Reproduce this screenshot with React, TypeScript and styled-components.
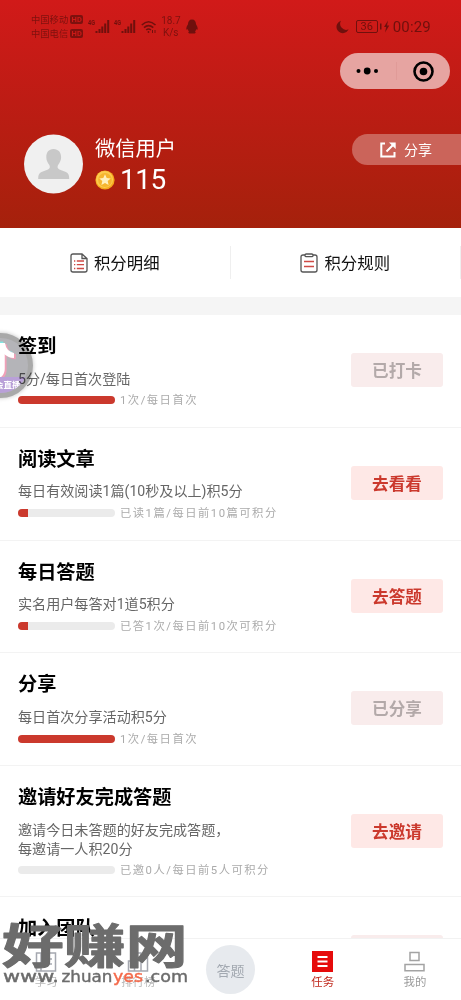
import React from "react";
import styled, { createGlobalStyle } from "styled-components";

const Global = createGlobalStyle`
  * { box-sizing: border-box; }
  html, body { margin: 0; padding: 0; }
  body {
    background: #fff;
    font-family: Roboto, "Noto Sans CJK SC", sans-serif;
    overflow: hidden;
  }
  svg { display: block; flex: none; }
`;

const Screen = styled.div`
  position: relative;
  width: 461px;
  height: 1000px;
  overflow: hidden;
  display: flex;
  flex-direction: column;
  background: #fff;
`;

const Header = styled.header`
  flex: none;
  height: 228px;
  background: linear-gradient(#d11a19 0%, #bd1c14 45%, #a5210c 100%);
  color: #fff;
`;

const StatusBar = styled.div`
  height: 53px;
  padding: 13px 30px 0 31px;
  display: flex;
  justify-content: space-between;
  align-items: flex-start;
  color: #70100d;
`;

const StatusGroup = styled.div<{ $gap: number }>`
  display: flex;
  align-items: center;
  height: 27px;
  gap: ${(p) => p.$gap}px;
`;

const Carriers = styled.div`
  display: flex;
  flex-direction: column;
  font-size: 9.3px;
  line-height: 14px;
  opacity: 0.85;
`;

const Carrier = styled.div`
  display: flex;
  align-items: center;
  gap: 2px;
`;

const HdTag = styled.span`
  width: 13px;
  height: 9px;
  border-radius: 2px;
  background: #70100d;
  color: #cd1a18;
  font-size: 7.5px;
  line-height: 9px;
  font-weight: 700;
  text-align: center;
`;

const Speed = styled.div`
  font-size: 10px;
  line-height: 12px;
  text-align: center;
  width: 19px;
  margin-right: 1px;
  opacity: 0.85;
`;

const Battery = styled.div`
  width: 22px;
  height: 13px;
  border: 1px solid #70100d;
  border-radius: 2px;
  font-size: 11px;
  line-height: 12px;
  text-align: center;
`;

const Clock = styled.div`
  font-size: 15px;
  letter-spacing: 0.2px;
  line-height: 18px;
`;

const CapsuleRow = styled.div`
  display: flex;
  justify-content: flex-end;
  padding-right: 11px;
`;

const Capsule = styled.div`
  width: 110px;
  height: 36px;
  border-radius: 18px;
  background: #e6a4a1;
  display: flex;
  align-items: center;
  justify-content: space-between;
  padding: 0 16px;
`;

const CapsuleLine = styled.span`
  width: 1px;
  height: 18px;
  margin-left: 1px;
  background: #e09b98;
`;

const Profile = styled.div`
  margin-top: 45px;
  padding-left: 24px;
  display: flex;
  align-items: flex-start;
`;

const Identity = styled.div`
  margin-left: 12px;
  padding-top: 1px;
  flex: 1;
`;

const UserName = styled.div`
  font-size: 20.3px;
  line-height: 28px;
`;

const Points = styled.div`
  display: flex;
  align-items: center;
  gap: 5px;
  height: 33px;
  font-size: 28px;
  line-height: 33px;
  letter-spacing: -0.5px;
`;

const ShareButton = styled.div`
  width: 109px;
  height: 31px;
  border-radius: 16px 0 0 16px;
  background: #cb645a;
  display: flex;
  align-items: center;
  padding-left: 28px;
  gap: 8px;
  font-size: 14px;
  line-height: 34px;
`;

const Actions = styled.div`
  flex: none;
  display: flex;
  height: 87px;
  border-bottom: 18px solid #f5f5f5;
  align-items: center;
`;

const Action = styled.div`
  width: 230.5px;
  height: 33px;
  border-right: 1px solid #efefef;
  display: flex;
  align-items: center;
  justify-content: center;
  gap: 6px;
  font-size: 16.4px;
  color: #111;
`;

const ActionLabel = styled.span`
  line-height: 33px;
  padding-top: 1px;
`;

const TaskRow = styled.section<{ $h: number }>`
  flex: none;
  height: ${(p) => p.$h}px;
  border-bottom: 1px solid #f3f3f3;
  padding: 17px 18px 0;
  display: flex;
  justify-content: space-between;
`;

const TaskBody = styled.div`
  display: flex;
  flex-direction: column;
`;

const TaskTitle = styled.h2`
  margin: 0;
  font-size: 19.2px;
  line-height: 30px;
  font-weight: 700;
  color: #000;
`;

const TaskDesc = styled.p`
  margin: 7.7px 0 0;
  font-size: 14.1px;
  line-height: 19px;
  color: #666;
  white-space: pre-line;
`;

const Progress = styled.div`
  display: flex;
  align-items: center;
  gap: 5px;
  height: 16px;
  margin-top: 3.8px;
  font-size: 11.3px;
  letter-spacing: 1.5px;
  color: #aaa;
`;

const ProgressNote = styled.span`
  line-height: 16px;
  padding-top: 2px;
`;

const Track = styled.div`
  width: 97px;
  height: 8px;
  border-radius: 4px;
  background: #ebebeb;
  overflow: hidden;
`;

const Fill = styled.div<{ $pct: number }>`
  width: ${(p) => p.$pct}%;
  height: 100%;
  background: #cb392d;
`;

const TaskButton = styled.div<{ $done?: boolean; $tall?: boolean }>`
  width: 92px;
  height: 34px;
  margin-top: ${(p) => (p.$tall ? 31 : 21)}px;
  border-radius: 3px;
  background: ${(p) => (p.$done ? "#f9ecec" : "#fee8e6")};
  color: ${(p) => (p.$done ? "#b3a9a9" : "#cb392d")};
  font-size: 16.6px;
  line-height: 37px;
  font-weight: 700;
  text-align: center;
`;

const NavBar = styled.nav`
  position: absolute;
  left: 0;
  right: 0;
  bottom: 0;
  height: 62px;
  background: #fff;
  border-top: 1px solid #f2f2f2;
  display: flex;
`;

const NavItem = styled.div<{ $active?: boolean; $faint?: boolean }>`
  flex: 1;
  display: flex;
  flex-direction: column;
  align-items: center;
  padding-top: 12px;
  gap: 1px;
  font-size: 11.4px;
  line-height: 16px;
  color: ${(p) => (p.$active ? "#c0281c" : p.$faint ? "#b8b8b8" : "#9b9b9b")};
`;

const Quiz = styled.div`
  width: 49px;
  height: 49px;
  margin-top: -6px;
  border-radius: 50%;
  background: #e7eaee;
  color: #a3a9b1;
  font-size: 14px;
  line-height: 53px;
  text-align: center;
`;

const FloatBall = styled.div`
  position: absolute;
  left: -32px;
  top: 333px;
  width: 65px;
  height: 65px;
  border-radius: 50%;
  border: 5px solid #a9a9a9;
  background: #b4b4b8;
  box-shadow: 0 0 4px rgba(0, 0, 0, 0.25);
  overflow: hidden;
  mix-blend-mode: multiply;
`;

const BallLabel = styled.div`
  position: absolute;
  left: 0;
  right: 0;
  bottom: 0;
  height: 16px;
  padding-left: 22px;
  background: #b9a0d8;
  color: #fff;
  font-size: 8.5px;
  line-height: 16px;
  font-weight: 700;
  white-space: nowrap;
`;

const BallNote = styled.div`
  position: absolute;
  left: 11px;
  top: 1px;
`;

const Watermark = styled.div`
  position: absolute;
  left: 0;
  top: 914px;
`;

const Signal = () => (
  <svg width="22" height="17" viewBox="0 0 22 17" fill="#70100d">
    <text x="0" y="7" fontSize="7" fontWeight="700" fontFamily="Roboto, sans-serif" textLength="7" lengthAdjust="spacingAndGlyphs">4G</text>
    <rect x="7.5" y="13" width="2" height="2" />
    <rect x="10.5" y="11" width="2" height="4" />
    <rect x="13.3" y="8.5" width="2" height="6.5" />
    <rect x="16.2" y="5.5" width="2" height="9.5" />
    <rect x="19.2" y="2" width="2" height="13" />
  </svg>
);

const Note = ({ color, shift }: { color: string; shift: number }) => (
  <g transform={`translate(${shift} ${shift * 0.7})`}>
    <path d="M18 4V30A8 8 0 1 1 10 22" fill="none" stroke={color} strokeWidth="5.5" />
    <path d="M16 4H21Q22 12 30 14V19Q24 19 19 14Z" fill={color} />
  </g>
);

const tasks = [
  { h: 112.75, title: "签到", desc: "5分/每日首次登陆", pct: 100, note: "1次/每日首次", action: "已打卡", done: true },
  { h: 112.75, title: "阅读文章", desc: "每日有效阅读1篇(10秒及以上)积5分", pct: 10, note: "已读1篇/每日前10篇可积分", action: "去看看" },
  { h: 112.75, title: "每日答题", desc: "实名用户每答对1道5积分", pct: 10, note: "已答1次/每日前10次可积分", action: "去答题" },
  { h: 112.75, title: "分享", desc: "每日首次分享活动积5分", pct: 100, note: "1次/每日首次", action: "已分享", done: true },
  { h: 131, title: "邀请好友完成答题", desc: "邀请今日未答题的好友完成答题，\n每邀请一人积20分", pct: 0, note: "已邀0人/每日前5人可积分", action: "去邀请", tall: true },
];

export default function App() {
  return (
    <Screen>
      <Global />
      <Header>
        <StatusBar>
          <StatusGroup $gap={4.5}>
            <Carriers>
              <Carrier>中国移动<HdTag>HD</HdTag></Carrier>
              <Carrier>中国电信<HdTag>HD</HdTag></Carrier>
            </Carriers>
            <Signal />
            <Signal />
            <svg width="16" height="14" viewBox="0 0 16 14" fill="none" stroke="#70100d" strokeWidth="1.6">
              <path d="M0.8 5 Q7.5 -1.5 14.5 5" />
              <path d="M3 7.6 Q7.5 3.6 12.3 7.6" />
              <path d="M5.2 10 Q7.5 8 10 10" />
              <circle cx="7.5" cy="12" r="0.9" fill="#70100d" stroke="none" />
              <path d="M11.5 10v3M14 10v3" strokeWidth="1" />
            </svg>
            <Speed>18.7<br />K/s</Speed>
            <svg width="12" height="15" viewBox="0 0 12 15" fill="#70100d">
              <path d="M6 .5C8.8 .5 10 2.6 10 5.3 11 6.8 12 8.8 11.6 10.6 11 11 10.6 10.6 10.3 10.1 10 11.2 9.6 12 9 12.6 10 13 10 14.2 8.6 14.4H3.4C2 14.2 2 13 3 12.6 2.4 12 2 11.2 1.7 10.1 1.4 10.6 1 11 .4 10.6 0 8.8 1 6.8 2 5.3 2 2.6 3.2 .5 6 .5Z" />
            </svg>
          </StatusGroup>
          <StatusGroup $gap={2}>
            <svg width="18" height="14" viewBox="0 0 18 14" fill="#70100d">
              <path d="M5 .8A6.3 6.3 0 1 0 12.6 9.3 6 6 0 0 1 5 .8Z" />
            </svg>
            <Battery>36</Battery>
            <svg width="11" height="13" viewBox="0 0 11 13" fill="#70100d">
              <rect x="0" y="3.5" width="1.5" height="6" />
              <path d="M8 .5 4 7h2.2L5 12.5 9.3 5.5H7Z" />
            </svg>
            <Clock>00:29</Clock>
          </StatusGroup>
        </StatusBar>
        <CapsuleRow>
          <Capsule>
            <svg width="23" height="8" viewBox="0 0 23 8">
              <circle cx="2.5" cy="4" r="2" />
              <circle cx="11.2" cy="4" r="3.4" />
              <circle cx="20" cy="4" r="2" />
            </svg>
            <CapsuleLine />
            <svg width="21" height="21" viewBox="0 0 21 21">
              <circle cx="10.5" cy="10.5" r="9" fill="none" stroke="#000" strokeWidth="2.6" />
              <circle cx="10.5" cy="10.5" r="3.8" />
            </svg>
          </Capsule>
        </CapsuleRow>
        <Profile>
          <svg width="59" height="60" viewBox="0 0 59 60">
            <circle cx="29.5" cy="30" r="29.5" fill="#f0f0f0" />
            <path d="M29.5 15c5 0 7.6 3.6 7.6 8.2 0 3.2-1.3 5.4-2.7 7.2-1.5 2-1 4 1 5l6.5 2.6c2.5 1 3.3 3 3.3 7H14.2c0-4 .8-6 3.3-7l6.5-2.6c2-1 2.500-3 1-5-1.4-1.8-2.7-4-2.7-7.200 0-4.600 2.200-8.200 7.200-8.200Z" fill="#c8c8c8" />
          </svg>
          <Identity>
            <UserName>微信用户</UserName>
            <Points>
              <svg width="20" height="20" viewBox="0 0 20 20">
                <circle cx="10" cy="10" r="9.6" fill="#f5a81c" />
                <circle cx="9.6" cy="9.5" r="8.5" fill="#fccb4e" />
                <circle cx="10" cy="10" r="6.9" fill="#f6b52e" />
                <path d="m10 4.300 1.700 3.700 4 .4-3 2.700.9 4-3.600-2.100-3.600 2.100.9-4-3-2.700 4-.4Z" fill="#fff0bd" />
              </svg>
              <span>115</span>
            </Points>
          </Identity>
          <ShareButton>
            <svg width="16" height="16" viewBox="0 0 16 16" fill="none" stroke="#fff" strokeWidth="2">
              <path d="M5 1.5H1.3V14.5H14.5V10M14 2 6.5 9.5" />
              <path d="M9 .5H15.7V7Z" fill="#fff" stroke="none" />
            </svg>
            分享
          </ShareButton>
        </Profile>
      </Header>
      <Actions>
        <Action>
          <svg width="18" height="20" viewBox="0 0 18 20" fill="none" stroke="#555" strokeWidth="1.3">
            <path d="M12 1H3Q1 1 1 3V17Q1 19 3 19H15Q17 19 17 17V5.5ZM12 1V5.5H17" />
            <path d="M4 8h1.3M4 11.7h1.3M4 15.5h1.3M6.8 8H14M6.8 11.7H14M6.8 15.5H14" stroke="#cf4a45" />
          </svg>
          <ActionLabel>积分明细</ActionLabel>
        </Action>
        <Action>
          <svg width="18" height="20" viewBox="0 0 18 20" fill="none" stroke="#555" strokeWidth="1.3">
            <path d="M5 2H3Q1 2 1 4V17Q1 19 3 19H15Q17 19 17 17V4Q17 2 15 2H13" />
            <rect x="5" y="1" width="8" height="2.6" rx="1.2" />
            <path d="M4 8.5H14M4 13.5H14" stroke="#cf4a45" />
          </svg>
          <ActionLabel>积分规则</ActionLabel>
        </Action>
      </Actions>
      {tasks.map((t) => (
        <TaskRow key={t.title} $h={t.h}>
          <TaskBody>
            <TaskTitle>{t.title}</TaskTitle>
            <TaskDesc>{t.desc}</TaskDesc>
            <Progress>
              <Track><Fill $pct={t.pct} /></Track>
              <ProgressNote>{t.note}</ProgressNote>
            </Progress>
          </TaskBody>
          <TaskButton $done={t.done} $tall={t.tall}>{t.action}</TaskButton>
        </TaskRow>
      ))}
      <TaskRow $h={131}>
        <TaskBody><TaskTitle>加入团队</TaskTitle></TaskBody>
        <TaskButton $done />
      </TaskRow>

      <FloatBall>
        <BallNote>
          <svg width="44" height="44" viewBox="0 0 44 44">
            <Note color="#7fe8e4" shift={-1.8} />
            <Note color="#f0a0b8" shift={1.8} />
            <Note color="#fff" shift={0} />
          </svg>
        </BallNote>
        <BallLabel>会直播</BallLabel>
      </FloatBall>

      <NavBar>
        <NavItem $faint>
          <svg width="22" height="22" viewBox="0 0 22 22" fill="none" stroke="#a5a8b0" strokeWidth="1.5">
            <path d="M1.5 2H20.5V20H1.5ZM6 2V20M9 8H17M9 13H17" />
          </svg>
          学习
        </NavItem>
        <NavItem $faint>
          <svg width="22" height="22" viewBox="0 0 22 22" fill="none" stroke="#a5a8b0" strokeWidth="1.5">
            <path d="M1.5 10H7.5V20H1.5ZM7.5 2H14V20H7.5ZM14 7H20.5V20H14Z" />
          </svg>
          排行榜
        </NavItem>
        <NavItem><Quiz>答题</Quiz></NavItem>
        <NavItem $active>
          <svg width="21" height="22" viewBox="0 0 21 22">
            <rect x="0" y="0" width="21" height="21" fill="#e60b0b" />
            <path d="M5.5 6H15.5M5.5 10.5H15.5M5.5 15H15.5" stroke="#fff" strokeWidth="1.8" />
          </svg>
          任务
        </NavItem>
        <NavItem>
          <svg width="21" height="22" viewBox="0 0 21 22" fill="none" stroke="#a3a3a3" strokeWidth="1.5">
            <path d="M6 1.5H15V9.5H6ZM1 13.5H20V19.7H1Z" />
          </svg>
          我的
        </NavItem>
      </NavBar>

      <Watermark>
        <svg width="195" height="76" viewBox="0 0 195 76" fill="#6c6c6c">
          <text transform="translate(2 48.5) scale(1.33 1)" fontFamily='"Noto Sans CJK SC", sans-serif' fontWeight="700" fontSize="46.5" stroke="#6c6c6c" strokeWidth="1" strokeLinejoin="round">好赚网</text>
          <g fontFamily='"DejaVu Sans", sans-serif' fontSize="15" stroke="#6c6c6c" strokeWidth="0.4">
            <text x="3" y="67.5" textLength="56" lengthAdjust="spacingAndGlyphs">www.</text>
            <text x="61.5" y="67.5" textLength="51" lengthAdjust="spacingAndGlyphs">zhuan</text>
            <text x="113" y="67.5" textLength="30" lengthAdjust="spacingAndGlyphs" fill="#f5694a" stroke="#f5694a">yes</text>
            <text x="145" y="67.5" textLength="43" lengthAdjust="spacingAndGlyphs">.com</text>
          </g>
        </svg>
      </Watermark>
    </Screen>
  );
}
